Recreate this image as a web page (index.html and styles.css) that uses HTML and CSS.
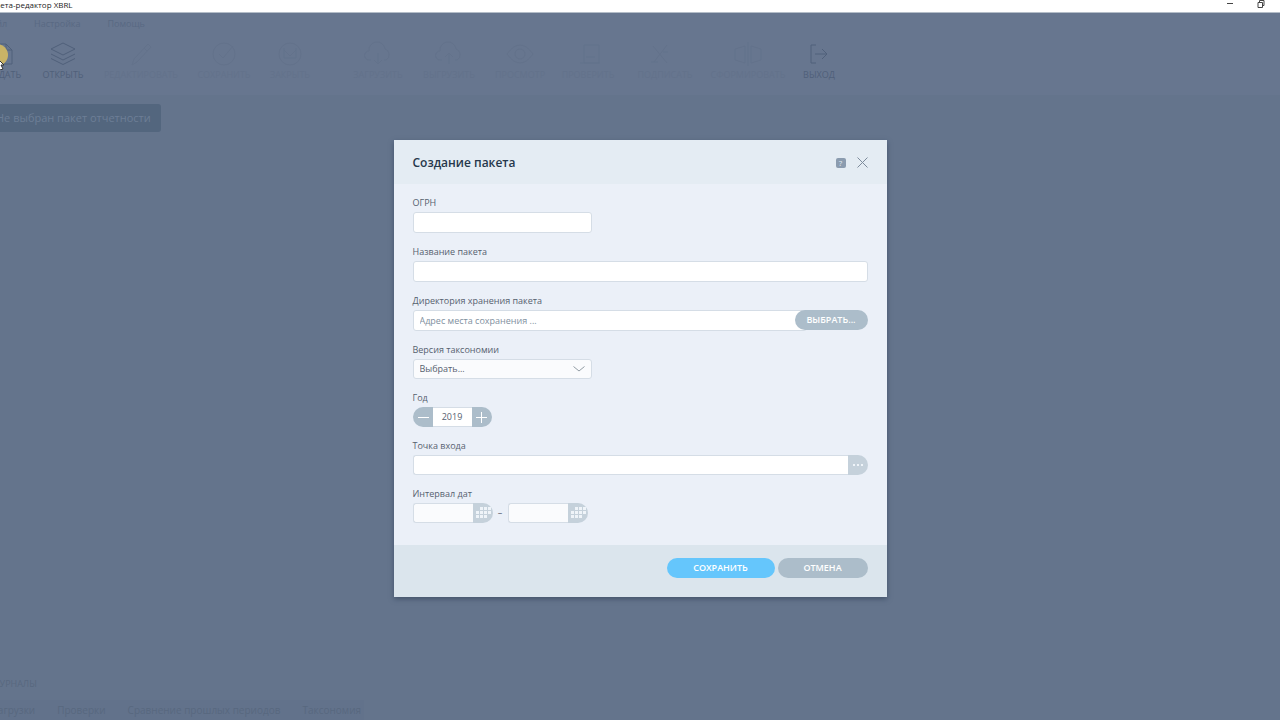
FILE: index.html
```html
<!DOCTYPE html>
<html lang="ru">
<head>
<meta charset="utf-8">
<meta name="viewport" content="width=device-width, initial-scale=1">
<title>Анкета-редактор XBRL</title>
<link rel="stylesheet" href="styles.css">
</head>
<body>
<div class="window">
  <header class="titlebar">
    <span class="titlebar-text">Анкета-редактор XBRL</span>
    <div class="window-controls">
      <button class="window-button" type="button" aria-label="Свернуть"><svg width="8" height="8" viewBox="0 0 8 8"><path d="M1 3.5h6"/></svg></button>
      <button class="window-button" type="button" aria-label="Восстановить"><svg width="8" height="8" viewBox="0 0 8 8"><path d="M1 2.5h4.500v5H1zM2.500 2.500v-2H7v5H5.500"/></svg></button>
    </div>
  </header>
  <main class="app">
    <div class="workspace">
      <div class="top-area">
        <nav class="menu">
          <a class="menu-link" href="#">Файл</a>
          <a class="menu-link" href="#">Настройка</a>
          <a class="menu-link" href="#">Помощь</a>
        </nav>
        <div class="toolbar">
          <button class="tool" type="button"><svg class="icon" viewBox="0 0 28 28"><path d="M8 4h11l6 6v14H8zM19 4v6h6M12 16h8"/></svg>СОЗДАТЬ</button>
          <button class="tool" type="button"><svg class="icon" viewBox="0 0 28 28"><path d="M14 3l12 6-12 6L2 9zM2 14l12 6 12-6M2 18.500l12 6 12-6"/></svg>ОТКРЫТЬ</button>
          <button class="tool faint" type="button"><svg class="icon" viewBox="0 0 28 28"><path d="M5 25l2-6L21 4l3 3L10 22zM17 8l3 3"/></svg>РЕДАКТИРОВАТЬ</button>
          <button class="tool faint" type="button"><svg class="icon" viewBox="0 0 28 28"><circle cx="14" cy="14" r="11"/><path d="M9 14l4 4 10-12"/></svg>СОХРАНИТЬ</button>
          <button class="tool faint" type="button"><svg class="icon" viewBox="0 0 28 28"><circle cx="14" cy="14" r="11"/><path d="M8 10l6 6 6-6M8 8v10h12V8"/></svg>ЗАКРЫТЬ</button>
          <span></span>
          <button class="tool faint" type="button"><svg class="icon" viewBox="0 0 28 28"><path d="M7 20H5a4 4 0 0 1 0-9 8 8 0 0 1 16-2 6 6 0 0 1 1 11h-2M14 13v11M10 20l4 4 4-4"/></svg>ЗАГРУЗИТЬ</button>
          <button class="tool faint" type="button"><svg class="icon" viewBox="0 0 28 28"><path d="M7 20H5a4 4 0 0 1 0-9 8 8 0 0 1 16-2 6 6 0 0 1 1 11h-2M14 24V13M10 17l4-4 4 4"/></svg>ВЫГРУЗИТЬ</button>
          <button class="tool faint" type="button"><svg class="icon" viewBox="0 0 28 28"><path d="M1 14q13-18 26 0-13 18-26 0z"/><circle cx="14" cy="14" r="5"/></svg>ПРОСМОТР</button>
          <button class="tool faint" type="button"><svg class="icon" viewBox="0 0 28 28"><path d="M10 5h15v18H10zM6 23h20M12 17h9"/></svg>ПРОВЕРИТЬ</button>
          <button class="tool faint" type="button"><svg class="icon" viewBox="0 0 28 28"><path d="M2 6l14 17M16 5L3 22M0 22h7M12 12h5"/></svg>ПОДПИСАТЬ</button>
          <button class="tool faint" type="button"><svg class="icon" viewBox="0 0 28 28"><path d="M14 2v24M11 6L1 9v11l10 3zM17 6l10 3v11l-10 3z"/></svg>СФОРМИРОВАТЬ</button>
          <button class="tool" type="button"><svg class="icon" viewBox="0 0 28 28"><path d="M11 5H6v18h5M10 14h12M17 9l5 5-5 5"/></svg>ВЫХОД</button>
        </div>
      </div>
      <p class="notice">Не выбран пакет отчетности</p>
      <section class="journals">
        <h2 class="journals-title">ЖУРНАЛЫ</h2>
        <nav class="tabs">
          <a class="tab" href="#">Загрузки</a>
          <a class="tab" href="#">Проверки</a>
          <a class="tab" href="#">Сравнение прошлых периодов</a>
          <a class="tab" href="#">Таксономия</a>
        </nav>
      </section>
    </div>
    <svg class="pointer" viewBox="0 0 20 28"><circle cx="-3" cy="13" r="11"/><path d="M-4 15v11l2-2 2 4 3-1-2-4h3z"/></svg>
    <div class="overlay">
      <form class="dialog" role="dialog" aria-labelledby="dialog-title">
        <header class="dialog-header">
          <h1 class="dialog-title" id="dialog-title">Создание пакета</h1>
          <button class="help" type="button" aria-label="Справка">?</button>
          <button class="close" type="button" aria-label="Закрыть"><svg width="11" height="11" viewBox="0 0 11 11"><path d="M.5.5l10 10M10.500.5l-10 10"/></svg></button>
        </header>
        <div class="dialog-body">
          <div class="field">
            <label class="label" for="ogrn">ОГРН</label>
            <input class="input short" id="ogrn" type="text">
          </div>
          <div class="field">
            <label class="label" for="name">Название пакета</label>
            <input class="input" id="name" type="text">
          </div>
          <div class="field">
            <label class="label" for="dir">Директория хранения пакета</label>
            <div class="group">
              <input class="input under" id="dir" type="text" placeholder="Адрес места сохранения ...">
              <button class="pill choose" type="button">ВЫБРАТЬ...</button>
            </div>
          </div>
          <div class="field">
            <label class="label" for="version">Версия таксономии</label>
            <div class="select-box">
              <select class="input low select" id="version"><option>Выбрать...</option></select>
              <svg class="chevron" width="12" height="6" viewBox="0 0 12 6"><path d="M.5.5L6 5 11.500.5"/></svg>
            </div>
          </div>
          <div class="field">
            <label class="label" for="year">Год</label>
            <div class="group">
              <button class="cap left" type="button" aria-label="Уменьшить"><svg width="12" height="12" viewBox="0 0 12 12"><path d="M1 6.500h11"/></svg></button>
              <input class="input low year" id="year" type="text" value="2019">
              <button class="cap" type="button" aria-label="Увеличить"><svg width="12" height="12" viewBox="0 0 12 12"><path d="M0 6.500h11M5.500 1v11"/></svg></button>
            </div>
          </div>
          <div class="field">
            <label class="label" for="entry">Точка входа</label>
            <div class="group">
              <input class="input low joined" id="entry" type="text">
              <button class="cap pale" type="button" aria-label="Обзор"><svg class="solid" width="12" height="4" viewBox="0 0 12 4"><path d="M1 1h2v2H1zM5 1h2v2H5zM9 1h2v2H9z"/></svg></button>
            </div>
          </div>
          <div class="field">
            <label class="label" for="date-from">Интервал дат</label>
            <div class="group">
              <input class="input low joined date" id="date-from" type="text">
              <button class="cap pale" type="button" aria-label="Календарь"><svg class="solid" width="16" height="12" viewBox="0 0 16 12"><path d="M5 0h3v3H5zM9 0h3v3H9zM13 0h3v3h-3zM1 4h3v3H1zM5 4h3v3H5zM9 4h3v3H9zM13 4h3v3h-3zM1 8h3v3H1zM5 8h3v3H5zM9 8h3v3H9z"/></svg></button>
              <span class="dash">–</span>
              <input class="input low joined date" type="text" aria-label="Дата окончания">
              <button class="cap pale" type="button" aria-label="Календарь"><svg class="solid" width="16" height="12" viewBox="0 0 16 12"><path d="M5 0h3v3H5zM9 0h3v3H9zM13 0h3v3h-3zM1 4h3v3H1zM5 4h3v3H5zM9 4h3v3H9zM13 4h3v3h-3zM1 8h3v3H1zM5 8h3v3H5zM9 8h3v3H9z"/></svg></button>
            </div>
          </div>
        </div>
        <footer class="dialog-footer">
          <button class="pill save" type="submit">СОХРАНИТЬ</button>
          <button class="pill cancel" type="button">ОТМЕНА</button>
        </footer>
      </form>
    </div>
  </main>
</div>
</body>
</html>
```

FILE: styles.css
```css
* { box-sizing: border-box; }
body { margin: 0; font: 9px/14px "Open Sans", "Noto Sans", sans-serif; color: #56616f; }
button, input, select { font: inherit; color: inherit; margin: 0; padding: 0; border: 0; }
button { background: none; display: flex; align-items: center; justify-content: center; }
h1, h2, p { margin: 0; }
a { color: inherit; text-decoration: none; }
svg { fill: none; stroke: currentColor; flex: none; }

.window { display: flex; flex-direction: column; height: 100vh; overflow: hidden; }
.titlebar { display: flex; flex: none; justify-content: space-between; height: 13px; background: #fff; border-bottom: 1px solid #b4bdc8; color: #1c1c1c; }
.titlebar-text { margin-left: -14px; font-size: 8px; line-height: 10px; white-space: nowrap; }
.window-controls { display: flex; gap: 23px; padding-right: 15px; }
.window-button { width: 8px; height: 8px; color: #444; }

.app { position: relative; flex: 1; min-height: 0; overflow: hidden; background: #64748c; }
.workspace { display: flex; flex-direction: column; height: 100%; margin-left: -30px; }
.top-area { height: 82px; background: #67768f; }
.menu { display: flex; gap: 27px; padding: 4px 0 0 14px; color: #596983; }
.toolbar { display: grid; grid-template-columns: 62px 62px 94px 72px 60px 22px 72px 70px 72px 64px 90px 76px 66px; padding-top: 9px; }
.tool { flex-direction: column; color: #50607a; font-size: 9px; white-space: nowrap; }
.tool.faint { color: #63728b; }
.icon { width: 28px; height: 28px; }
.notice { align-self: flex-start; margin-top: 9px; padding: 0 10px 0 26px; border-radius: 3px; background: #53667e; color: #6d7e96; font-size: 11px; line-height: 28px; }
.journals { margin-top: auto; color: #58687f; }
.journals-title { padding-left: 22px; font-size: 9px; font-weight: 400; }
.tabs { display: flex; gap: 22px; width: 394px; margin-top: 9px; padding: 3px 0 3px 22px; background: #62728b; font-size: 10px; white-space: nowrap; }
.pointer { position: absolute; left: 0; top: 29px; width: 20px; height: 28px; stroke: none; }
.pointer circle { fill: #c9b366; }
.pointer path { fill: #fff; stroke: #333; }

.overlay { position: absolute; inset: 0; display: flex; align-items: center; justify-content: center; padding-top: 3px; }
.dialog { width: 493px; max-width: 100%; background: #ebf0f8; box-shadow: 0 2px 5px #43536b; }
.dialog-header { display: flex; align-items: center; height: 44px; padding: 2px 19px 0; background: #e4ecf3; }
.dialog-title { margin-right: auto; color: #26384b; font-size: 12px; font-weight: 600; line-height: 16px; }
.help { width: 10px; height: 10px; margin-right: 11px; border-radius: 2px; background: #8b9caf; color: #e4ecf3; font-size: 8px; line-height: 10px; }
.close { width: 11px; height: 11px; color: #7d8b9b; }
.dialog-body { display: flex; flex-direction: column; gap: 12px; padding: 12px 19px 22px; }
.field { display: flex; flex-direction: column; gap: 2px; }
.label { align-self: flex-start; }
.input { width: 100%; min-width: 0; height: 21px; padding: 0 6px; border: 1px solid #d5dde6; border-radius: 3px; background: #fff; }
.input::placeholder { color: #8190a0; opacity: 1; }
.input.short { width: 179px; }
.input.low { height: 20px; }
.input.joined { border-radius: 3px 0 0 3px; border-right: 0; }
.input.under { margin-right: -12px; }
.input.year { width: 39px; padding: 0; border-width: 1px 0; border-radius: 0; text-align: center; }
.input.date { width: 60px; background: #fafbfd; }
.group { display: flex; align-items: center; }
.select-box { display: grid; align-items: center; width: 179px; }
.select { grid-area: 1 / 1; appearance: none; background: #fafbfd; }
.chevron { grid-area: 1 / 1; justify-self: end; margin-right: 7px; color: #929ca4; pointer-events: none; }
.cap { flex: none; width: 20px; height: 20px; border-radius: 0 10px 10px 0; background: #acbdca; color: #fff; }
.cap.left { border-radius: 10px 0 0 10px; }
.cap.pale { background: #c5d1db; color: #eff4f9; }
.solid { fill: currentColor; stroke: none; }
.dash { width: 15px; text-align: center; }
.pill { flex: none; height: 20px; border-radius: 10px; background: #acbdca; color: #fff; font-weight: 600; }
.choose { width: 73px; z-index: 1; }
.dialog-footer { display: flex; justify-content: flex-end; gap: 3px; padding: 13px 19px 19px; background: #dbe5ed; }
.save { width: 108px; background: #65c6fc; }
.cancel { width: 90px; }
```
